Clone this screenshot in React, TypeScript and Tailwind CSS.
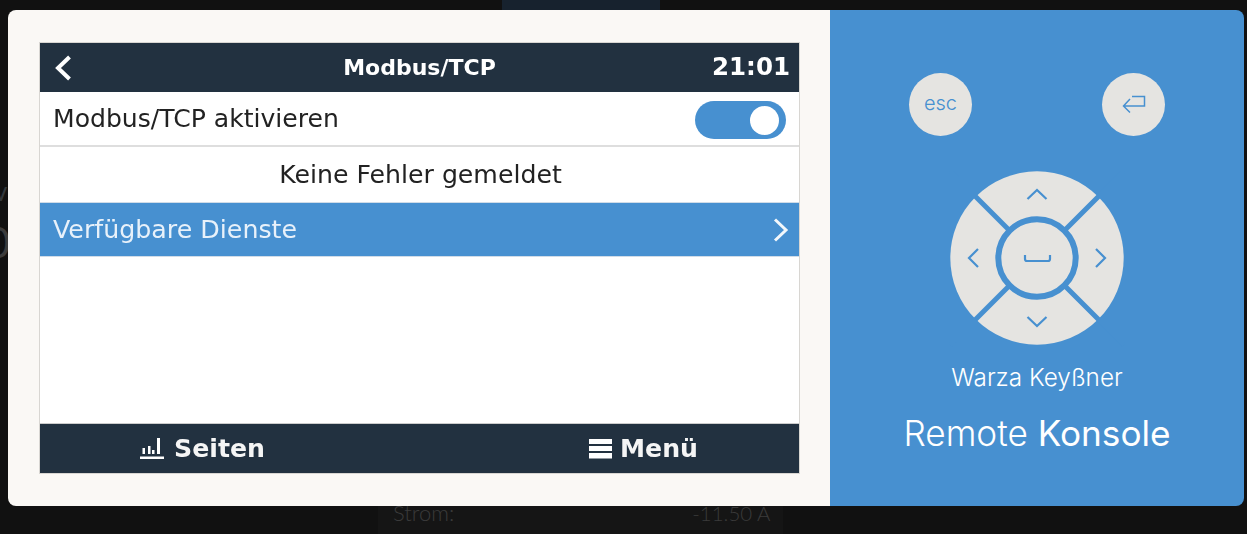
import React from "react";

const dv = "font-['DejaVu_Sans',sans-serif]";

function Wheel() {
  const c = "#4790d0";
  return (
    <svg width="176" height="176" viewBox="0 0 176 176" className="block">
      <circle cx="88" cy="87" r="86.700" fill="#e5e4e1" />
      <g stroke={c} strokeWidth="5" fill="none">
        <path d="M1 0 L175 174 M175 0 L1 174" />
      </g>
      <circle cx="88" cy="87" r="38.700" fill="#e5e4e1" stroke={c} strokeWidth="6" />
      <g stroke={c} strokeWidth="2.200" fill="none">
        <path d="M78.500 28 L88 19 L97.500 28" />
        <path d="M78.500 146 L88 155 L97.500 146" />
        <path d="M29 78 L20 87 L29 96" />
        <path d="M147 78 L156 87 L147 96" />
        <path d="M76 84 V88 Q76 90 78 90 H99 Q101 90 101 88 V84" />
      </g>
    </svg>
  );
}

export default function App() {
  return (
    <div className="relative h-[534px] w-[1247px] overflow-hidden bg-[#111111]">
      <div className="absolute left-[502px] top-0 h-[10px] w-[158px] bg-[#17222e]" />
      <div className="absolute left-[378px] top-[506px] flex h-[28px] w-[405px] bg-[#151515] font-['Lato',sans-serif] text-[22px] font-light leading-[14px] text-[#3a3a3a]">
        <span className="ml-[15px]">Strom:</span>
        <span className="ml-[238px] text-[20.500px]">-11.50 A</span>
      </div>
      <div className="absolute left-[-6px] top-[172px] font-['Lato',sans-serif] text-[26px] text-[#33383c]">v</div>
      <div className="absolute left-[-14px] top-[212px] font-['Lato',sans-serif] text-[42px] leading-[60px] text-[#3c3c3c]">0</div>

      <div className="absolute left-[8px] top-[10px] flex h-[496px] w-[1236px] overflow-hidden rounded-[8px]">
        <div className="h-full w-[822px] bg-[#faf8f5] pl-[31px] pt-[32px]">
          <div className={`flex h-[432px] w-[761px] flex-col border border-[#d8d6d2] bg-white ${dv} blur-[0.3px]`}>
            <div className="grid h-[49px] grid-cols-[1fr_auto_1fr] items-center bg-[#223140] px-[14px] text-white">
              <svg width="18" height="26" viewBox="0 0 18 26" fill="none" stroke="white" strokeWidth="4">
                <path d="M15.500 2 L4 13 L15.500 24" />
              </svg>
              <span className="text-[22px] font-bold">Modbus/TCP</span>
              <span className="-mr-[5px] text-right text-[24.500px] font-bold">21:01</span>
            </div>
            <div className="flex h-[55px] items-center justify-between border-b-2 border-[#dedede] pl-[13px] pr-[13px] pt-[1px] text-[25.100px] text-[#222222]">
              <span>Modbus/TCP aktivieren</span>
              <div className="mt-[2px] flex h-[38px] w-[91px] items-center justify-end rounded-full bg-[#4790d0] pr-[7px]">
                <div className="h-[29px] w-[29px] rounded-full bg-white" />
              </div>
            </div>
            <div className="flex h-[55px] items-center justify-center pl-[2px] text-[25.200px] text-[#222222]">Keine Fehler gemeldet</div>
            <div className="flex h-[55px] items-center justify-between border-y border-[#d0dce8] bg-[#4790d0] pl-[13px] pr-[10px] text-[25.300px] text-[#e8f1fa]">
              <span>Verfügbare Dienste</span>
              <svg width="16" height="24" viewBox="0 0 16 24" fill="none" stroke="#f2f7fb" strokeWidth="3">
                <path d="M2 1.500 L13 12 L2 22.500" />
              </svg>
            </div>
            <div className="flex-1" />
            <div className="flex h-[50px] border-t border-[#cccccc] bg-[#223140] text-[25.200px] font-bold text-[#f5f5f5]">
              <div className="flex w-[380px] items-center justify-end gap-[10px] pr-[155px]">
                <svg width="24" height="21" viewBox="0 0 24 21" fill="white">
                  <rect x="0" y="18.500" width="24" height="2.500" />
                  <rect x="2.500" y="10" width="2.500" height="6" />
                  <rect x="8" y="8" width="2.500" height="8" />
                  <rect x="12" y="12" width="2.500" height="4" />
                  <rect x="17" y="0" width="3" height="16" />
                </svg>
                <span>Seiten</span>
              </div>
              <div className="flex flex-1 items-center justify-end gap-[8px] pr-[101px]">
                <svg width="23" height="20" viewBox="0 0 23 20" fill="white">
                  <rect x="0" y="0" width="23" height="5" />
                  <rect x="0" y="7" width="23" height="5" />
                  <rect x="0" y="14" width="23" height="5.500" />
                </svg>
                <span>Menü</span>
              </div>
            </div>
          </div>
        </div>

        <div className="flex h-full flex-1 flex-col items-center bg-[#4790d0] pt-[63px] font-['Inter',sans-serif] text-white">
          <div className="flex w-[256px] justify-between">
            <div className="flex h-[63px] w-[63px] items-center justify-center rounded-full bg-[#e5e4e1] pb-[3px] text-[20px] font-light text-[#4790d0]">esc</div>
            <div className="flex h-[63px] w-[63px] items-center justify-center rounded-full bg-[#e5e4e1]">
              <svg width="24" height="19" viewBox="0 0 24 19" fill="none" stroke="#4790d0" strokeWidth="1.500">
                <path d="M10 1.500 H22.500 V11 H1.500 M8 4 L1.500 11 L8 17.500" />
              </svg>
            </div>
          </div>
          <div className="mt-[35px]"><Wheel /></div>
          <div className="mt-[15px] text-[24.300px] font-light leading-[30px]">Warza Keyßner</div>
          <div className="mt-[19px] text-[35.200px] font-light leading-[44px]">Remote <span className="font-normal">Konsole</span></div>
        </div>
      </div>
    </div>
  );
}
